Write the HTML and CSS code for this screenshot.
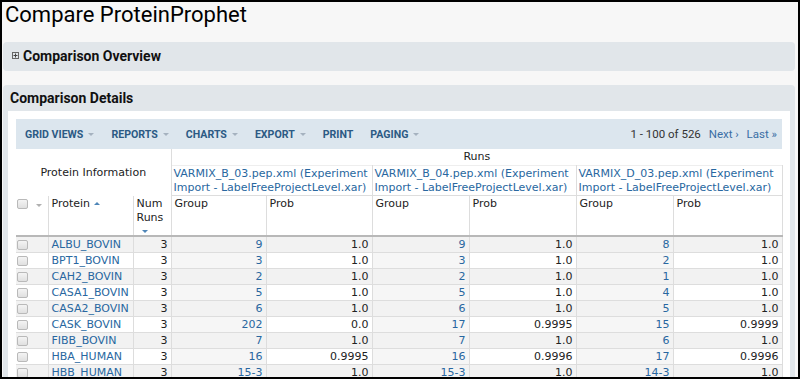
FILE: index.html
```html
<!doctype html>
<html lang="en">
	<head>
		<meta charset="UTF-8" />
		<title>Compare ProteinProphet</title>
		<link rel="stylesheet" href="styles.css">
	</head>
	<body>
		<div class="page">
			<h1 class="title">Compare ProteinProphet</h1>

			<section class="panel">
				<div class="panel-head">
					<svg class="expand" width="7" height="7" viewBox="0 0 7 7">
						<rect x="0.5" y="0.5" width="6" height="6" fill="none" stroke="#666" />
						<path d="M1.5 3.5h4M3.5 1.5v4" stroke="#444" />
					</svg>
					Comparison Overview
				</div>
			</section>

			<section class="panel panel-open">
				<div class="panel-head">Comparison Details</div>
				<div class="panel-body">
					<div class="grid-bar">
						<span class="menu">Grid Views<i class="caret"></i></span>
						<span class="menu">Reports<i class="caret"></i></span>
						<span class="menu">Charts<i class="caret"></i></span>
						<span class="menu">Export<i class="caret"></i></span>
						<span class="menu">Print</span>
						<span class="menu">Paging<i class="caret"></i></span>
						<span class="paging">
							1 - 100 of 526
							<a href="#">Next ›</a>
							<a href="#">Last »</a>
						</span>
					</div>

					<table class="grid">
						<colgroup>
							<col style="width: 32px" />
							<col style="width: 85px" />
							<col style="width: 38px" />
							<col style="width: 95px" />
							<col style="width: 106px" />
							<col style="width: 97px" />
							<col style="width: 107px" />
							<col style="width: 97px" />
							<col style="width: 109px" />
						</colgroup>
						<thead>
							<tr class="head-top">
								<th colspan="3" rowspan="2" class="group-title">Protein Information</th>
								<th colspan="6" class="runs-title">Runs</th>
							</tr>
							<tr class="head-runs">
								<th colspan="2"><a href="#">VARMIX_B_03.pep.xml (Experiment<br />Import - LabelFreeProjectLevel.xar)</a></th>
								<th colspan="2"><a href="#">VARMIX_B_04.pep.xml (Experiment<br />Import - LabelFreeProjectLevel.xar)</a></th>
								<th colspan="2"><a href="#">VARMIX_D_03.pep.xml (Experiment<br />Import - LabelFreeProjectLevel.xar)</a></th>
							</tr>
							<tr class="head-cols">
								<th class="select"><span class="check"></span><i class="caret"></i></th>
								<th>Protein <i class="sort-up"></i></th>
								<th>Num<br />Runs<i class="sort-down"></i></th>
								<th>Group</th>
								<th>Prob</th>
								<th>Group</th>
								<th>Prob</th>
								<th>Group</th>
								<th>Prob</th>
							</tr>
						</thead>
						<tbody id="rows"></tbody>
					</table>
				</div>
			</section>
		</div>

		<script>
			const rows = [
				['ALBU_BOVIN', '9', '1.0', '9', '1.0', '8', '1.0'],
				['BPT1_BOVIN', '3', '1.0', '3', '1.0', '2', '1.0'],
				['CAH2_BOVIN', '2', '1.0', '2', '1.0', '1', '1.0'],
				['CASA1_BOVIN', '5', '1.0', '5', '1.0', '4', '1.0'],
				['CASA2_BOVIN', '6', '1.0', '6', '1.0', '5', '1.0'],
				['CASK_BOVIN', '202', '0.0', '17', '0.9995', '15', '0.9999'],
				['FIBB_BOVIN', '7', '1.0', '7', '1.0', '6', '1.0'],
				['HBA_HUMAN', '16', '0.9995', '16', '0.9996', '17', '0.9996'],
				['HBB_HUMAN', '15-3', '1.0', '15-3', '1.0', '14-3', '1.0'],
			]

			document.getElementById('rows').innerHTML = rows
				.map(([name, g1, p1, g2, p2, g3, p3], i) => `
					<tr class="${i % 2 ? 'even' : 'odd'}">
						<td class="select"><span class="check"></span></td>
						<td><a href="#">${name}</a></td>
						<td class="num">3</td>
						<td class="num group"><a href="#">${g1}</a></td>
						<td class="num">${p1}</td>
						<td class="num group"><a href="#">${g2}</a></td>
						<td class="num">${p2}</td>
						<td class="num group"><a href="#">${g3}</a></td>
						<td class="num">${p3}</td>
					</tr>`)
				.join('')
		</script>
	</body>
</html>
```

FILE: styles.css
```css
:root {
	--color-page: #f7f7f7;
	--color-panel: #e1e6ea;
	--color-bar: #dce6ee;
	--color-link: #2867a0;
	--color-menu: #2c5a84;
	--color-text: #222222;
	--color-line: #dddddd;
	--color-stripe: #f2f2f2;
}

html,
body {
	margin: 0;
}

.page {
	box-sizing: border-box;
	height: 379px;
	overflow: hidden;
	padding: 0 3px 0 1px;

	border: 2px solid #000000;
	background-color: var(--color-page);
	color: var(--color-text);

	font-family: Roboto, 'Liberation Sans', sans-serif;
}

a {
	color: var(--color-link);
	text-decoration: none;
}

.title {
	margin: 0;
	padding: 0 0 0 2px;
	height: 40px;

	font-size: 22px;
	line-height: 26px;
	font-weight: 400;
	color: #000000;
}

/* Panels */

.panel {
	margin-bottom: 14px;
	border-radius: 4px;
	background-color: var(--color-panel);
}

.panel-head {
	display: flex;
	align-items: center;
	gap: 4px;
	height: 27px;
	padding: 0 8px 2px;

	font-size: 14px;
	font-weight: 700;
	color: #111111;
}

.panel-open .panel-head {
	height: 25px;
	padding: 0 7px 1px;
}

.expand {
	margin-left: 1px;
}

.panel-body {
	margin: 0 5px;
	padding: 8px 8px 0;
	background-color: #ffffff;
}

/* Grid toolbar */

.grid-bar {
	display: flex;
	align-items: center;
	height: 30px;
	padding: 0 5px 0 9px;

	background-color: var(--color-bar);
	font-size: 10.6px;
	font-weight: 700;
	text-transform: uppercase;
	color: var(--color-menu);
}

.menu {
	display: flex;
	align-items: center;
	margin-right: 17px;
}

.caret {
	display: inline-block;
	margin-left: 5px;
	border-top: 3px solid #a5b2bf;
	border-left: 3px solid transparent;
	border-right: 3px solid transparent;
}

.paging {
	margin-left: auto;
	text-transform: none;
	font-weight: 400;
	font-size: 11.5px;
	color: #333333;
}

.paging a {
	margin-left: 5px;
	color: #3a6ea5;
}

/* Grid */

.grid {
	width: 766px;
	table-layout: fixed;
	border-collapse: collapse;

	font-family: 'DejaVu Sans', Verdana, sans-serif;
	font-size: 11px;
	line-height: 14px;
}

.grid th {
	padding: 0 3px;
	font-weight: 400;
	text-align: left;
	vertical-align: top;
	background-color: #ffffff;
}

.head-top th {
	height: 15px;
	padding: 1px 3px 0;
}

.group-title,
.runs-title {
	text-align: center !important;
}

.group-title {
	vertical-align: middle !important;
	border-right: 1px solid var(--color-line);
}

.head-runs th {
	height: 28px;
	white-space: nowrap;
	overflow: hidden;
	padding: 1px 2px 0;
	border-right: 1px solid var(--color-line);
	border-top: 1px solid #eeeeee;
	border-bottom: 1px solid var(--color-line);
}

.head-cols th {
	height: 38px;
	padding-top: 1px;
	padding-bottom: 0;
	border-right: 1px solid var(--color-line);
	border-bottom: 2px solid #b8b8b8;
}

.grid th.select {
	padding-left: 1px;
}

.check {
	display: inline-block;
	box-sizing: border-box;
	width: 11px;
	height: 10px;
	vertical-align: top;
	margin-top: 2px;

	border: 1px solid #b9b9b9;
	border-radius: 2px;
	background: linear-gradient(#f4f4f4, #e0e0e0);
}

.head-cols .caret {
	margin-left: 8px;
	vertical-align: top;
	margin-top: 7px;
	border-top-color: #b0b0b0;
}

.sort-up,
.sort-down {
	display: inline-block;
	border-left: 3px solid transparent;
	border-right: 3px solid transparent;
	vertical-align: middle;
}

.sort-up {
	border-bottom: 3px solid #4f86b8;
}

.sort-down {
	display: block;
	width: 0;
	margin: 5px 0 0 5px;
	border-top: 3px solid #4f86b8;
}

.grid td {
	height: 15px;
	padding: 0 3px;
	white-space: nowrap;
	border-right: 1px solid var(--color-line);
	border-bottom: 1px solid var(--color-line);
}

.grid td.select {
	padding-left: 1px;
}

.grid td.num {
	text-align: right;
}

.grid td.group {
	background-color: #f6f6f6;
}

.odd td,
.odd td.group {
	background-color: var(--color-stripe);
}
```
